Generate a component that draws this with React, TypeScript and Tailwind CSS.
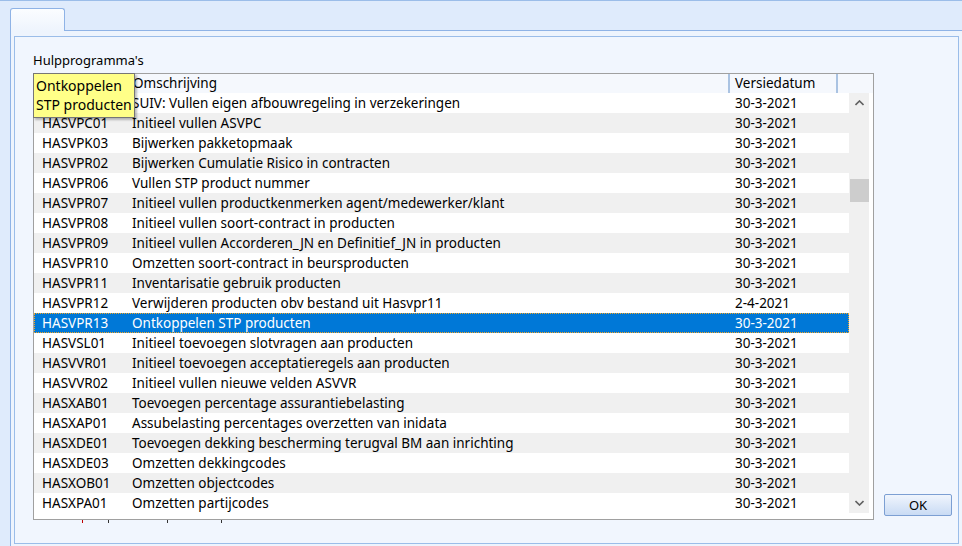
import React from "react";

type Row = { code: string; desc: string; date: string };

const rows: Row[] = [
  { code: "", desc: "SUIV: Vullen eigen afbouwregeling in verzekeringen", date: "30-3-2021" },
  { code: "HASVPC01", desc: "Initieel vullen ASVPC", date: "30-3-2021" },
  { code: "HASVPK03", desc: "Bijwerken pakketopmaak", date: "30-3-2021" },
  { code: "HASVPR02", desc: "Bijwerken Cumulatie Risico in contracten", date: "30-3-2021" },
  { code: "HASVPR06", desc: "Vullen STP product nummer", date: "30-3-2021" },
  { code: "HASVPR07", desc: "Initieel vullen productkenmerken agent/medewerker/klant", date: "30-3-2021" },
  { code: "HASVPR08", desc: "Initieel vullen soort-contract in producten", date: "30-3-2021" },
  { code: "HASVPR09", desc: "Initieel vullen Accorderen_JN en Definitief_JN in producten", date: "30-3-2021" },
  { code: "HASVPR10", desc: "Omzetten soort-contract in beursproducten", date: "30-3-2021" },
  { code: "HASVPR11", desc: "Inventarisatie gebruik producten", date: "30-3-2021" },
  { code: "HASVPR12", desc: "Verwijderen producten obv bestand uit Hasvpr11", date: "2-4-2021" },
  { code: "HASVPR13", desc: "Ontkoppelen STP producten", date: "30-3-2021" },
  { code: "HASVSL01", desc: "Initieel toevoegen slotvragen aan producten", date: "30-3-2021" },
  { code: "HASVVR01", desc: "Initieel toevoegen acceptatieregels aan producten", date: "30-3-2021" },
  { code: "HASVVR02", desc: "Initieel vullen nieuwe velden ASVVR", date: "30-3-2021" },
  { code: "HASXAB01", desc: "Toevoegen percentage assurantiebelasting", date: "30-3-2021" },
  { code: "HASXAP01", desc: "Assubelasting percentages overzetten van inidata", date: "30-3-2021" },
  { code: "HASXDE01", desc: "Toevoegen dekking bescherming terugval BM aan inrichting", date: "30-3-2021" },
  { code: "HASXDE03", desc: "Omzetten dekkingcodes", date: "30-3-2021" },
  { code: "HASXOB01", desc: "Omzetten objectcodes", date: "30-3-2021" },
  { code: "HASXPA01", desc: "Omzetten partijcodes", date: "30-3-2021" },
];

const SELECTED = "HASVPR13";

function ListRow({ row, index }: { row: Row; index: number }) {
  const selected = row.code === SELECTED;
  const bg = selected
    ? "bg-[#0078d7] text-white outline outline-1 outline-dotted outline-[#f5a623] -outline-offset-1"
    : index % 2 === 0
      ? "bg-white"
      : "bg-[#f0f0f0]";
  return (
    <div className={`flex h-[20px] items-center ${bg}`}>
      <div className="w-[98px] pl-[8px] shrink-0">{row.code}</div>
      <div className="w-[597px] shrink-0">{row.desc}</div>
      <div className="pl-[6px]">{row.date}</div>
    </div>
  );
}

export default function App() {
  return (
    <div
      className="w-[962px] h-[546px] overflow-hidden bg-[#dfebfc] border-t border-[#9bbde9] flex flex-col text-[13.5px] text-black"
      style={{ fontFamily: '"Noto Sans", "Liberation Sans", sans-serif' }}
    >
      {/* Tab strip */}
      <div className="h-[29px] flex items-end pl-[10px] shrink-0">
        <div className="relative z-10 -mb-px w-[55px] h-[23px] rounded-t-[3px] border border-b-0 border-[#8fb3e6] bg-gradient-to-b from-[#fbfdff] to-[#eef4fd]" />
      </div>

      {/* Tab page */}
      <div className="flex-1 ml-[10px] border-l border-t border-[#8fb3e6] bg-[#eef4fd] pl-[3px] pt-[5px]">
        <div className="h-[508px] w-[945px] border border-[#9bbde9] bg-[#f1f6fe] pl-[18px] pt-[14px]">
          <div className="h-[22px] leading-[18px] text-[13px]">Hulpprogramma's</div>

          <div className="flex items-end gap-[10px]">
            {/* List */}
            <div className="relative w-[841px] h-[447px] border border-[#a0a0a0] bg-white">
              {/* Header */}
              <div className="flex h-[19px] items-center bg-[#f5f8fd]">
                <div className="w-[99px] shrink-0" />
                <div className="w-[595px] shrink-0 h-full flex items-center">Omschrijving</div>
                <div className="w-[2px] h-full bg-[#aac3e2] shrink-0" />
                <div className="w-[106px] shrink-0 pl-[5px]">Versiedatum</div>
                <div className="w-[2px] h-full bg-[#aac3e2] shrink-0" />
              </div>

              <div className="flex">
                <div className="w-[815px] bg-white">
                  {rows.map((r, i) => (
                    <ListRow key={r.code || "first"} row={r} index={i} />
                  ))}
                </div>
                {/* Scrollbar */}
                <div className="w-[20px] h-[420px] bg-[#f0f0f0] flex flex-col items-center">
                  <div className="h-[20px] flex items-center justify-center">
                    <svg width="9" height="6" viewBox="0 0 9 6">
                      <path d="M0.5 5 L4.5 1 L8.5 5" fill="none" stroke="#606060" strokeWidth="1.6" />
                    </svg>
                  </div>
                  <div className="h-[66px]" />
                  <div className="w-[19px] h-[23px] bg-[#cdcdcd]" />
                  <div className="flex-1" />
                  <div className="h-[20px] flex items-center justify-center">
                    <svg width="9" height="6" viewBox="0 0 9 6">
                      <path d="M0.5 1 L4.5 5 L8.5 1" fill="none" stroke="#606060" strokeWidth="1.6" />
                    </svg>
                  </div>
                </div>
              </div>

              {/* Tooltip */}
              <div className="absolute -left-px -top-px w-[102px] h-[45px] border border-[#767676] bg-[#ffff88] shadow-[2px_2px_2px_rgba(0,0,0,0.25)] pl-[2px] pt-[2px] text-[14px] leading-[19px]">
                <div>Ontkoppelen</div>
                <div>STP producten</div>
              </div>
            </div>

            {/* OK button */}
            <button className="mb-[4px] w-[68px] h-[22px] rounded-[2px] border border-[#7c9fd3] bg-gradient-to-b from-[#f0f5fd] to-[#c9dbf4] text-[13px] leading-[20px]">
              OK
            </button>
          </div>

          {/* clipped label tops below the list */}
          <div className="relative h-[4px]">
            <div className="absolute left-[49px] top-0 w-px h-[3px] bg-[#c00000]" />
            <div className="absolute left-[75px] top-0 w-px h-[3px] bg-[#333]" />
            <div className="absolute left-[134px] top-0 w-px h-[3px] bg-[#333]" />
            <div className="absolute left-[188px] top-0 w-px h-[3px] bg-[#333]" />
          </div>
        </div>
      </div>
    </div>
  );
}
